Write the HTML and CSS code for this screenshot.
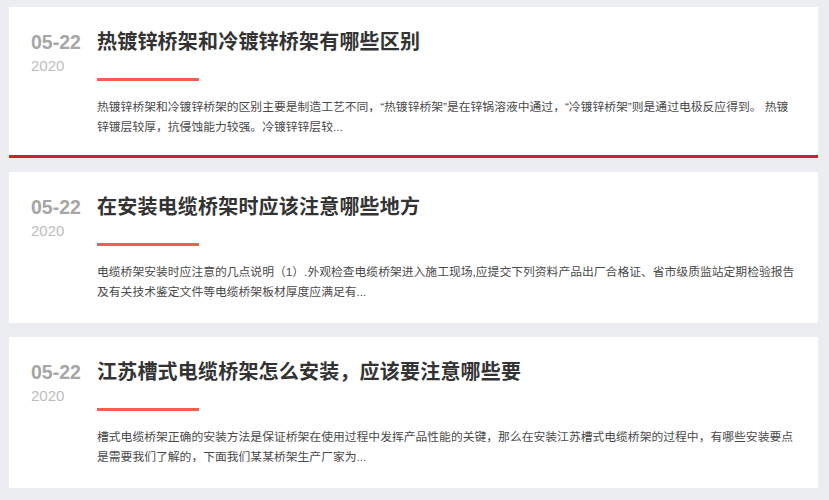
FILE: index.html
```html
<!DOCTYPE html>
<html lang="zh-CN">
<head>
  <meta charset="UTF-8" />
  <meta name="viewport" content="width=device-width, initial-scale=1.0"/>
  <title>新闻列表</title>
  <link rel="stylesheet" href="styles.css">
</head>
<body>
  <ul class="news">
    <li class="item active">
      <div class="date">
        <span class="day">05-22</span>
        <span class="year">2020</span>
      </div>
      <div class="info">
        <h3>热镀锌桥架和冷镀锌桥架有哪些区别</h3>
        <span class="bar"></span>
        <p>热镀锌桥架和冷镀锌桥架的区别主要是制造工艺不同，“热镀锌桥架”是在锌锅溶液中通过，“冷镀锌桥架”则是通过电极反应得到。 热镀锌镀层较厚，抗侵蚀能力较强。冷镀锌锌层较...</p>
      </div>
    </li>
    <li class="item">
      <div class="date">
        <span class="day">05-22</span>
        <span class="year">2020</span>
      </div>
      <div class="info">
        <h3>在安装电缆桥架时应该注意哪些地方</h3>
        <span class="bar"></span>
        <p>电缆桥架安装时应注意的几点说明（1）.外观检查电缆桥架进入施工现场,应提交下列资料产品出厂合格证、省市级质监站定期检验报告及有关技术鉴定文件等电缆桥架板材厚度应满足有...</p>
      </div>
    </li>
    <li class="item">
      <div class="date">
        <span class="day">05-22</span>
        <span class="year">2020</span>
      </div>
      <div class="info">
        <h3>江苏槽式电缆桥架怎么安装，应该要注意哪些要</h3>
        <span class="bar"></span>
        <p>槽式电缆桥架正确的安装方法是保证桥架在使用过程中发挥产品性能的关键，那么在安装江苏槽式电缆桥架的过程中，有哪些安装要点是需要我们了解的，下面我们某某桥架生产厂家为...</p>
      </div>
    </li>
  </ul>
</body>
</html>
```

FILE: styles.css
```css
body {
  margin: 0;
  padding: 7px 11px 0 9px;
  background-color: #ebedf0;
  font-family: "Liberation Sans", "Noto Sans CJK SC", sans-serif;
}

.news {
  list-style: none;
  margin: 0;
  padding: 0;
}

.item {
  display: flex;
  background: white;
  padding: 21px 21px 18px 22px;
  margin-bottom: 14px;
  border-bottom: 3px solid white;
}

.item.active {
  border-bottom-color: #d3201f;
}

.date {
  width: 66px;
  flex-shrink: 0;
}

.date span {
  display: block;
}

.day {
  font-size: 19.5px;
  line-height: 28px;
  font-weight: bold;
  color: #a6a6a6;
}

.year {
  font-size: 15px;
  line-height: 20px;
  color: #bdbdbd;
}

.info {
  flex: 1;
}

h3 {
  margin: 0;
  font-size: 20px;
  letter-spacing: 0.2px;
  line-height: 28px;
  font-weight: bold;
  color: #333;
}

.bar {
  display: block;
  width: 102px;
  height: 3px;
  margin-top: 22px;
  background-color: #f0604d;
}

p {
  margin: 16px 0 0;
  font-size: 11.8px;
  line-height: 20px;
  color: #4a4a4a;
}
```
